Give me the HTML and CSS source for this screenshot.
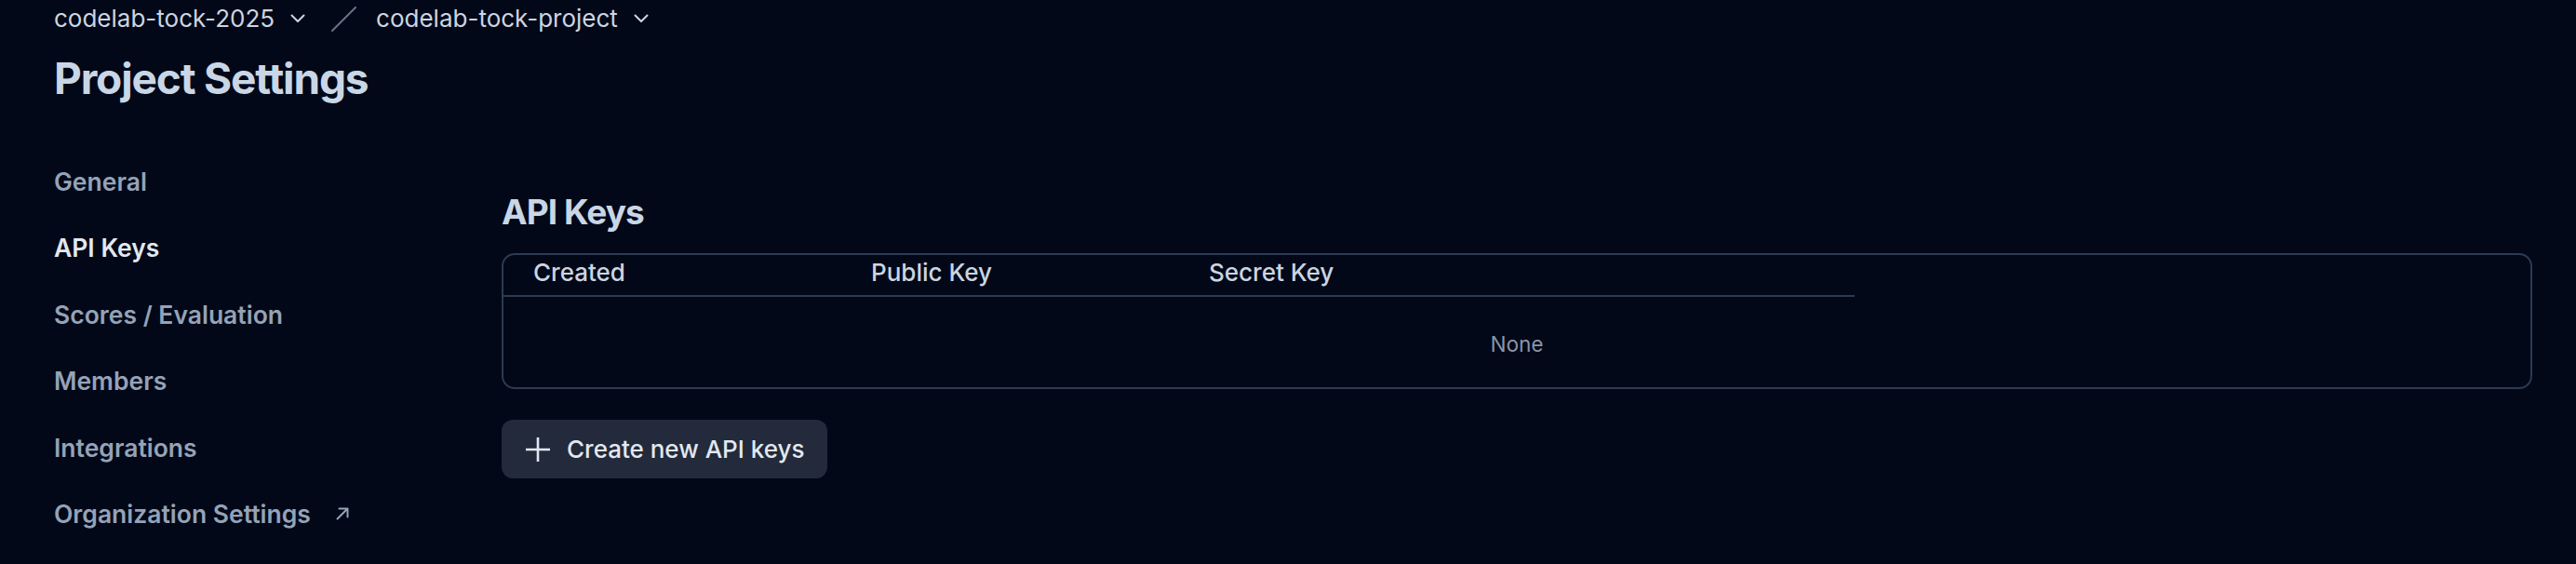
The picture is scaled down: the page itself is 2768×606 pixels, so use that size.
FILE: index.html
```html
<!DOCTYPE html>
<html lang="en">
<head>
<meta charset="utf-8">
<title>Project Settings</title>
<link rel="stylesheet" href="styles.css">
</head>
<body>
<div class="page">
  <nav class="breadcrumb">
    <span class="crumb">codelab-tock-2025</span>
    <svg class="chev chev-1" width="16" height="10" viewBox="0 0 16 10"><polyline points="1.5,1.5 8,8 14.5,1.5"/></svg>
    <svg class="slash" width="27" height="27" viewBox="0 0 27 27"><line x1="26" y1="1" x2="1" y2="26"/></svg>
    <span class="crumb crumb-2">codelab-tock-project</span>
    <svg class="chev chev-2" width="16" height="10" viewBox="0 0 16 10"><polyline points="1.5,1.5 8,8 14.5,1.5"/></svg>
  </nav>
  <h1 class="title">Project Settings</h1>
  <div class="layout">
    <aside class="sidebar">
      <a class="nav-item">General</a>
      <a class="nav-item active">API Keys</a>
      <a class="nav-item">Scores / Evaluation</a>
      <a class="nav-item">Members</a>
      <a class="nav-item">Integrations</a>
      <a class="nav-item">Organization Settings <svg class="ext" width="14" height="14" viewBox="0 0 14 14"><path d="M1.5 12.5 L12 2 M3.5 1.5 H12.5 V10.5"/></svg></a>
    </aside>
    <main class="main">
      <h2 class="section-title">API Keys</h2>
      <div class="table-box">
        <div class="thead">
          <div class="th">Created</div>
          <div class="th">Public Key</div>
          <div class="th">Secret Key</div>
          <div class="th"></div>
        </div>
        <div class="empty">None</div>
      </div>
      <button class="btn">
        <svg class="plus" width="26" height="26" viewBox="0 0 26 26"><path d="M13 0 V26 M0 13 H26"/></svg>
        <span>Create new API keys</span>
      </button>
    </main>
  </div>
</div>
</body>
</html>
```

FILE: styles.css
```css
html, body {
  margin: 0;
  padding: 0;
  background: #020817;
}
body {
  font-family: Inter, "Liberation Sans", sans-serif;
  color: #cbd5e1;
  width: 2768px;
  height: 606px;
  overflow: hidden;
}
.page {
  padding: 4px 47px 0 58px;
}
.breadcrumb {
  display: flex;
  align-items: center;
  height: 32px;
  font-size: 26px;
  line-height: 32px;
  color: #cbd5e1;
}
.chev {
  fill: none;
  stroke: #cbd5e1;
  stroke-width: 2;
  stroke-linecap: round;
  stroke-linejoin: round;
}
.chev-1 { margin-left: 17px; }
.chev-2 { margin-left: 17px; }
.slash {
  margin-left: 28px;
  fill: none;
  stroke: #64748b;
  stroke-width: 2;
  stroke-linecap: round;
}
.crumb-2 { margin-left: 21px; }
.title {
  margin: 20px 0 0;
  font-size: 46px;
  line-height: 56px;
  font-weight: 700;
  letter-spacing: -0.025em;
  color: #c8d6e6;
}
.layout {
  display: flex;
  margin-top: 63px;
}
.sidebar {
  width: 481px;
  flex-shrink: 0;
  display: flex;
  flex-direction: column;
  gap: 31.4px;
}
.nav-item {
  display: flex;
  align-items: center;
  font-size: 26.5px;
  line-height: 40px;
  font-weight: 600;
  color: #94a3b8;
}
.nav-item.active {
  color: #e2e8f0;
}
.ext {
  margin-left: 27px;
  fill: none;
  stroke: #94a3b8;
  stroke-width: 2;
  stroke-linecap: round;
  stroke-linejoin: round;
}
.main {
  flex: 1;
  padding-top: 31px;
}
.section-title {
  margin: 0;
  font-size: 37px;
  line-height: 44px;
  font-weight: 700;
  letter-spacing: -0.025em;
  color: #c8d6e6;
}
.table-box {
  margin-top: 22px;
  border: 2px solid #2c3a52;
  border-radius: 14px;
}
.thead {
  display: grid;
  grid-template-columns: repeat(4, 363px);
  width: 1452px;
  border-bottom: 2px solid #2c3a52;
}
.th {
  padding: 0 32px 6px;
  height: 37px;
  line-height: 37px;
  font-size: 26px;
  font-weight: 500;
  color: #cbd5e1;
}
.empty {
  padding-top: 5px;
  line-height: 92px;
  text-align: center;
  font-size: 22.5px;
  color: #8b95a8;
}
.btn {
  margin-top: 33px;
  display: flex;
  align-items: center;
  gap: 18px;
  height: 63px;
  padding: 0 24px 0 26px;
  border: none;
  border-radius: 12px;
  background: #222a3b;
  font-family: Inter, "Liberation Sans", sans-serif;
  font-size: 26px;
  font-weight: 500;
  color: #e2e8f0;
}
.plus {
  fill: none;
  stroke: #e2e8f0;
  stroke-width: 2.6;
}
```
